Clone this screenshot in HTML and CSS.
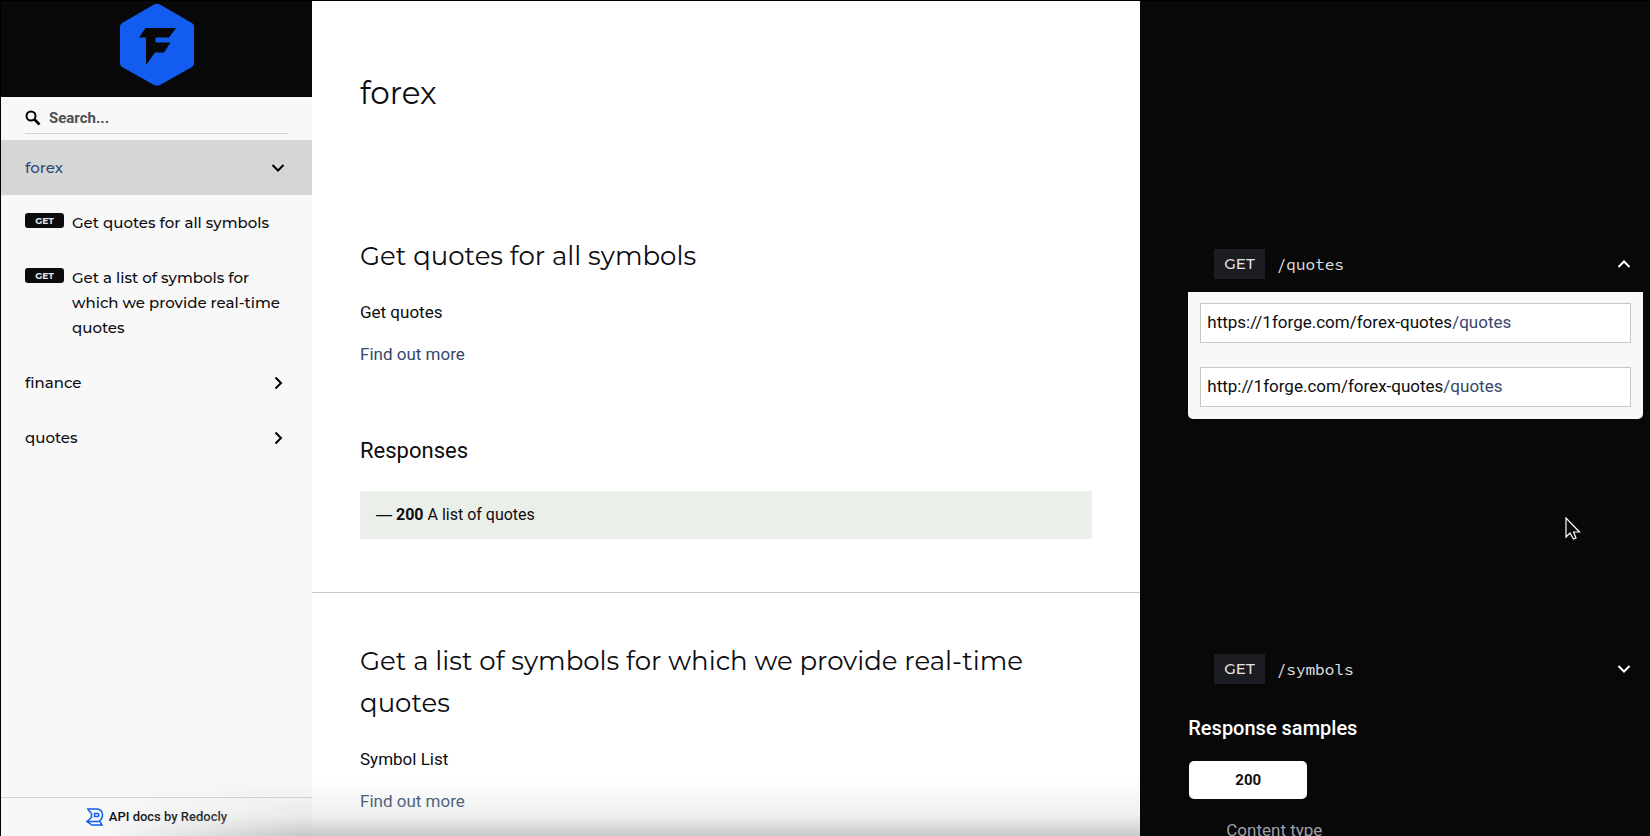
FILE: index.html
```html
<!DOCTYPE html>
<html lang="en">
<head>
<meta charset="utf-8">
<title>forex API</title>
<meta name="viewport" content="width=device-width, initial-scale=1">
<link rel="stylesheet" href="styles.css">
</head>
<body>
<div class="page">
  <aside class="sidebar">
    <div class="brand">
      <svg class="brand-logo" viewBox="0 0 74 84" role="img" aria-label="1Forge">
        <path fill="#125cf0" d="M34 1.500Q37 0 40 1.500L71 19.500Q74 21 74 24V60Q74 63 71 64.500L40 82Q37 83.500 34 82L3 64.500Q0 63 0 60V24Q0 21 3 19.500Z"/>
        <path fill="#080808" d="M25.500 25H56L49 34.500H35.500V39.500H50.500L44 49.500H35L26 62V34.500H19Z"/>
      </svg>
    </div>
    <div class="search">
      <label class="search-field">
        <svg class="search-icon" viewBox="0 0 16 16" aria-hidden="true"><circle cx="6" cy="6" r="4.500" fill="none" stroke="#000" stroke-width="2"/><path d="M9.500 9.500L14.500 14.500" stroke="#000" stroke-width="2.600"/></svg>
        <input class="search-input" type="text" placeholder="Search..." aria-label="Search">
      </label>
    </div>
    <nav class="menu">
      <a class="menu-item menu-item-active" href="#forex">forex
        <svg class="chevron" viewBox="0 0 14 14" aria-hidden="true"><path d="M1.500 4L7 9.500L12.500 4"/></svg></a>
      <a class="menu-item menu-operation" href="#quotes-all"><span class="verb">GET</span><span>Get quotes for all symbols</span></a>
      <a class="menu-item menu-operation" href="#symbols"><span class="verb">GET</span><span>Get a list of symbols for which we provide real-time quotes</span></a>
      <a class="menu-item" href="#finance">finance
        <svg class="chevron" viewBox="0 0 14 14" aria-hidden="true"><path d="M4.500 1.500L10 7L4.500 12.500"/></svg></a>
      <a class="menu-item" href="#quotes">quotes
        <svg class="chevron" viewBox="0 0 14 14" aria-hidden="true"><path d="M4.500 1.500L10 7L4.500 12.500"/></svg></a>
    </nav>
    <a class="credit" href="#redocly">
      <svg class="credit-logo" viewBox="0 0 18 18" aria-hidden="true"><g fill="none" stroke="#125cf0" stroke-width="1.500"><path d="M1 1H11.500Q16.500 2 16.500 7Q16.500 11 13.500 13L16 17H6L1 13.500H13"/><path d="M2 1.500L5.500 5.500V9.500L1.500 13"/><path d="M8.500 5.500H12Q13.500 7 12 8.500H8.500Z"/></g></svg>
      API docs by Redocly</a>
  </aside>

  <main class="content">
    <section class="row" id="forex">
      <div class="doc doc-intro"><h1 class="title">forex</h1></div>
      <div class="samples"></div>
    </section>

    <section class="row" id="quotes-all">
      <div class="doc doc-divided">
        <h2 class="heading">Get quotes for all symbols</h2>
        <p class="text">Get quotes</p>
        <p class="text"><a class="link" href="#more-quotes">Find out more</a></p>
        <h3 class="subheading">Responses</h3>
        <div class="response"><span class="dash">—</span> <strong>200</strong> A list of quotes</div>
      </div>
      <div class="samples">
        <button class="endpoint" type="button" aria-expanded="true">
          <span class="method">GET</span><span class="path">/quotes</span>
          <svg class="chevron chevron-light" viewBox="0 0 14 14" aria-hidden="true"><path d="M1.500 10L7 4.500L12.500 10"/></svg>
        </button>
        <div class="servers">
          <div class="server">https://1forge.com/forex-quotes<span class="server-path">/quotes</span></div>
          <div class="server">http://1forge.com/forex-quotes<span class="server-path">/quotes</span></div>
        </div>
      </div>
    </section>

    <section class="row row-last" id="symbols">
      <div class="doc">
        <h2 class="heading">Get a list of symbols for which we provide real-time quotes</h2>
        <p class="text">Symbol List</p>
        <p class="text"><a class="link" href="#more-symbols">Find out more</a></p>
      </div>
      <div class="samples">
        <button class="endpoint" type="button" aria-expanded="false">
          <span class="method">GET</span><span class="path">/symbols</span>
          <svg class="chevron chevron-light" viewBox="0 0 14 14" aria-hidden="true"><path d="M1.500 4L7 9.500L12.500 4"/></svg>
        </button>
        <h3 class="samples-title">Response samples</h3>
        <button class="tab" type="button">200</button>
        <div class="content-type">Content type</div>
      </div>
    </section>
  </main>
  <div class="fade"></div>
  <svg class="cursor" viewBox="0 0 16 24" aria-hidden="true"><path d="M1 1V20L5 16L8.500 22L11 21L8.500 15H14.500Z" fill="#080808" stroke="#fff" stroke-width="1.200"/></svg>
</div>
</body>
</html>
```
FILE: styles.css
```css
* { box-sizing: border-box; }

body {
  margin: 0;
  background: #080808;
  color: #0c0c10;
  font: 17px/26px Roboto, sans-serif;
}

a { color: inherit; text-decoration: none; }
h1, h2, h3, p { margin: 0; font-weight: 400; }
button { border: 0; font: inherit; cursor: pointer; }

.page {
  position: relative;
  display: flex;
  height: 100vh;
  overflow: hidden;
  border-top: 1px solid #000;
}

/* Sidebar */
.sidebar {
  display: flex;
  flex-direction: column;
  flex: 0 0 312px;
  border-left: 1px solid #000;
  background: #f8f8f8;
}

.brand {
  display: flex;
  justify-content: center;
  height: 96px;
  padding-top: 2px;
  background: #080808;
}
.brand-logo { width: 74px; height: 84px; }

.search { padding: 4px 24px 6px; }
.search-field {
  display: flex;
  align-items: center;
  gap: 8px;
  height: 33px;
  padding-top: 2px;
  border-bottom: 1px solid #d3d5d4;
}
.search-icon { width: 16px; height: 16px; }
.search-input {
  flex: 1;
  min-width: 0;
  padding: 0;
  border: 0;
  outline: 0;
  background: transparent;
  font: 700 15px/24px Roboto, sans-serif;
}
.search-input::placeholder { color: #4d4e56; opacity: 1; }

.menu { flex: 1; font: 500 15px/25px Montserrat, Inter, sans-serif; }
.menu-item {
  display: flex;
  align-items: center;
  justify-content: space-between;
  padding: 15px 27px 15px 24px;
}
.menu-item-active { background: #d5d7d6; color: #2c4778; }
.menu-operation {
  align-items: flex-start;
  justify-content: flex-start;
  gap: 8px;
  padding-right: 24px;
}
.verb {
  flex: 0 0 39px;
  height: 15px;
  margin-top: 3px;
  border-radius: 3px;
  background: #0b0b0d;
  color: #e4e4e8;
  font-size: 9px;
  font-weight: 700;
  line-height: 15px;
  text-align: center;
}

.chevron {
  width: 14px;
  height: 14px;
  fill: none;
  stroke: #000;
  stroke-width: 2;
}
.chevron-light { margin-left: auto; stroke: #fff; }

.credit {
  display: flex;
  align-items: center;
  justify-content: center;
  gap: 5px;
  height: 39px;
  border-top: 1px solid #d0d2d1;
  font-size: 13px;
  font-weight: 500;
}
.credit-logo { width: 18px; height: 18px; }

/* Documentation rows */
.content {
  display: flex;
  flex-direction: column;
  flex: 1;
  min-width: 0;
}
.row {
  display: grid;
  grid-template-columns: 13fr 8fr;
  flex: none;
}
.row-last { flex: 1 0 auto; }

.doc {
  min-width: 0;
  padding: 47px 48px 53px;
  background: #fff;
}
.doc-intro { padding: 68px 48px 71px; }
.doc-divided { border-bottom: 1px solid #c8c9c9; }

.title { font: 400 31px/48px Montserrat, Inter, sans-serif; }
.heading {
  margin-bottom: 22px;
  font: 400 26px/42px Montserrat, Inter, sans-serif;
}
.text { margin-bottom: 16px; }
.link { color: #36476d; }
.subheading {
  margin: 69px 0 25px;
  font-size: 22px;
  line-height: 30px;
}
.response {
  padding: 11px 16px;
  background: #ebefea;
  font-size: 16px;
}
.dash { font-family: "Liberation Sans", Arial, sans-serif; }

/* Samples column */
.samples {
  min-width: 0;
  padding: 48px 7px 0 48px;
  background: #080808;
}
.endpoint {
  display: flex;
  align-items: center;
  gap: 12px;
  width: 100%;
  padding: 13px 12px 13px 26px;
  background: transparent;
  color: #e3e3e6;
}
.method {
  padding: 2px 10px;
  background: #1c1c23;
  font: 500 15px/26px Montserrat, Inter, sans-serif;
}
.path { font: 16px/26px "Source Code Pro", "DejaVu Sans Mono", monospace; }

.servers {
  display: grid;
  gap: 24px;
  padding: 11px 12px 12px;
  border-radius: 0 0 5px 5px;
  background: #f8f8f8;
}
.server {
  padding: 5px 6px 7px;
  border: 1px solid #c6c8c8;
  background: #fff;
}
.server-path { color: #36476d; }

.samples-title {
  margin: 16px 0 18px;
  color: #fff;
  font-size: 20px;
  font-weight: 500;
  line-height: 30px;
}
.tab {
  display: block;
  width: 118px;
  margin-left: 1px;
  padding: 6px 0;
  border-radius: 5px;
  background: #fff;
  color: #111;
  font-size: 15px;
  font-weight: 700;
}
.content-type {
  padding: 18px 38px 0;
  color: #a0a0a5;
  font-size: 17px;
}

/* Overlays */
.fade {
  position: absolute;
  right: 510px;
  bottom: 0;
  left: 100px;
  height: 58px;
  background: linear-gradient(to bottom, rgba(200, 208, 202, 0), rgba(200, 208, 202, 0.300) 65%, rgba(190, 192, 191, 0.850));
  -webkit-mask-image: linear-gradient(to right, transparent, #000 200px);
  mask-image: linear-gradient(to right, transparent, #000 200px);
  pointer-events: none;
}
.cursor {
  position: absolute;
  top: 516px;
  left: 1565px;
  width: 16px;
  height: 24px;
}
```
